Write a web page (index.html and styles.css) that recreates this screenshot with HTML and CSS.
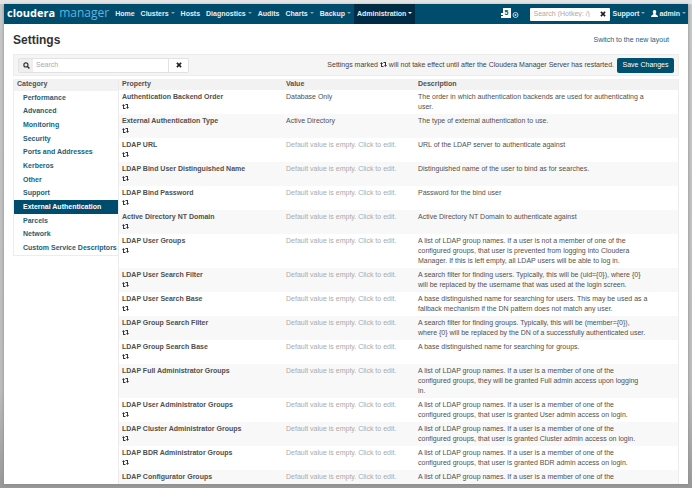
FILE: index.html
```html
<!DOCTYPE html>
<html lang="en">
<head>
<meta charset="utf-8">
<title>Settings - Cloudera Manager</title>
<link rel="stylesheet" href="styles.css">
</head>
<body>
<svg class="defs" aria-hidden="true">
  <symbol id="restart" viewBox="0 0 7 5"><path d="M0 2 1.500 0 3 2H2v2h1.500V5H1V2zM7 3 5.500 5 4 3h1V1H3.500V0H6v3z"/></symbol>
  <symbol id="cross" viewBox="0 0 10 10"><path d="M2.400.5 5 3.100 7.600.5 9.500 2.400 6.900 5l2.600 2.600-1.900 1.900L5 6.900 2.400 9.500.5 7.600 3.100 5 .5 2.400z"/></symbol>
</svg>
<div class="window">
  <header class="navbar">
    <a class="brand" href="#"><span class="brand-main">cloudera</span><span class="brand-sub">manager</span></a>
    <nav class="menu">
      <a href="#">Home</a>
      <a class="drop" href="#">Clusters</a>
      <a href="#">Hosts</a>
      <a class="drop" href="#">Diagnostics</a>
      <a href="#">Audits</a>
      <a class="drop" href="#">Charts</a>
      <a class="drop" href="#">Backup</a>
      <a class="drop active" href="#">Administration</a>
    </nav>
    <div class="tools">
      <a class="commands" href="#" aria-label="Running commands">
        <svg class="commands-icon" viewBox="0 0 18 12"><path fill="#fff" d="M2 0h8v10H0V8h2V7H0V5h2z"/><circle cx="14.500" cy="7" r="2.500" fill="none" stroke="#b8d8e6"/><circle cx="14.500" cy="7" r="1" fill="#b8d8e6"/></svg>
        <span class="badge">5</span>
      </a>
      <div class="quick">
        <input type="text" placeholder="Search (Hotkey: /)" aria-label="Search">
        <button type="button" aria-label="Clear"><svg class="cross"><use href="#cross"/></svg></button>
      </div>
      <a class="drop" href="#">Support</a>
      <a class="drop" href="#"><svg class="user" viewBox="0 0 12 12"><path fill="#fff" d="M6 0c2 0 3 1.500 3 3.500C9 5 8.300 6.200 7.500 7c.5 1.500 4.500 1.500 4.500 5H0c0-3.500 4-3.500 4.500-5C3.700 6.200 3 5 3 3.500 3 1.500 4 0 6 0z"/></svg>admin</a>
    </div>
  </header>
  <main class="page">
    <div class="title-row">
      <h1>Settings</h1>
      <a href="#">Switch to the new layout</a>
    </div>
    <form class="filter">
      <div class="search">
        <label for="search" aria-label="Search settings"><svg class="lens" viewBox="0 0 12 12"><circle cx="5" cy="5" r="3.500" fill="none" stroke="#333" stroke-width="2"/><path d="m8 8 3 3" stroke="#333" stroke-width="2.500"/></svg></label>
        <input id="search" type="text" placeholder="Search">
        <button type="button" aria-label="Clear search"><svg class="cross"><use href="#cross"/></svg></button>
      </div>
      <p>Settings marked <svg class="restart"><use href="#restart"/></svg> will not take effect until after the Cloudera Manager Server has restarted.</p>
      <button class="save" type="submit">Save Changes</button>
    </form>
    <div class="columns">
      <aside>
        <h2>Category</h2>
        <ul>
          <li><a href="#">Performance</a></li>
          <li><a href="#">Advanced</a></li>
          <li><a href="#">Monitoring</a></li>
          <li><a href="#">Security</a></li>
          <li><a href="#">Ports and Addresses</a></li>
          <li><a href="#">Kerberos</a></li>
          <li><a href="#">Other</a></li>
          <li><a href="#">Support</a></li>
          <li><a class="selected" href="#">External Authentication</a></li>
          <li><a href="#">Parcels</a></li>
          <li><a href="#">Network</a></li>
          <li><a href="#">Custom Service Descriptors</a></li>
        </ul>
      </aside>
      <div class="settings">
      <table>
        <colgroup><col class="col-property"><col class="col-value"><col></colgroup>
        <thead><tr><th>Property</th><th>Value</th><th>Description</th></tr></thead>
        <tbody>
          <tr><th>Authentication Backend Order<svg class="restart"><use href="#restart"/></svg></th><td>Database Only</td><td>The order in which authentication backends are used for authenticating a user.</td></tr>
          <tr><th>External Authentication Type<svg class="restart"><use href="#restart"/></svg></th><td>Active Directory</td><td>The type of external authentication to use.</td></tr>
          <tr><th>LDAP URL<svg class="restart"><use href="#restart"/></svg></th><td class="empty">Default value is empty. Click to edit.</td><td>URL of the LDAP server to authenticate against</td></tr>
          <tr><th>LDAP Bind User Distinguished Name<svg class="restart"><use href="#restart"/></svg></th><td class="empty">Default value is empty. Click to edit.</td><td>Distinguished name of the user to bind as for searches.</td></tr>
          <tr><th>LDAP Bind Password<svg class="restart"><use href="#restart"/></svg></th><td class="empty">Default value is empty. Click to edit.</td><td>Password for the bind user</td></tr>
          <tr><th>Active Directory NT Domain<svg class="restart"><use href="#restart"/></svg></th><td class="empty">Default value is empty. Click to edit.</td><td>Active Directory NT Domain to authenticate against</td></tr>
          <tr><th>LDAP User Groups<svg class="restart"><use href="#restart"/></svg></th><td class="empty">Default value is empty. Click to edit.</td><td>A list of LDAP group names. If a user is not a member of one of the configured groups, that user is prevented from logging into Cloudera Manager. If this is left empty, all LDAP users will be able to log in.</td></tr>
          <tr><th>LDAP User Search Filter<svg class="restart"><use href="#restart"/></svg></th><td class="empty">Default value is empty. Click to edit.</td><td>A search filter for finding users. Typically, this will be (uid={0}), where {0} will be replaced by the username that was used at the login screen.</td></tr>
          <tr><th>LDAP User Search Base<svg class="restart"><use href="#restart"/></svg></th><td class="empty">Default value is empty. Click to edit.</td><td>A base distinguished name for searching for users. This may be used as a fallback mechanism if the DN pattern does not match any user.</td></tr>
          <tr><th>LDAP Group Search Filter<svg class="restart"><use href="#restart"/></svg></th><td class="empty">Default value is empty. Click to edit.</td><td>A search filter for finding groups. Typically, this will be (member={0}), where {0} will be replaced by the DN of a successfully authenticated user.</td></tr>
          <tr><th>LDAP Group Search Base<svg class="restart"><use href="#restart"/></svg></th><td class="empty">Default value is empty. Click to edit.</td><td>A base distinguished name for searching for groups.</td></tr>
          <tr><th>LDAP Full Administrator Groups<svg class="restart"><use href="#restart"/></svg></th><td class="empty">Default value is empty. Click to edit.</td><td>A list of LDAP group names. If a user is a member of one of the<br>configured groups, they will be granted Full admin access upon logging<br>in.</td></tr>
          <tr><th>LDAP User Administrator Groups<svg class="restart"><use href="#restart"/></svg></th><td class="empty">Default value is empty. Click to edit.</td><td>A list of LDAP group names. If a user is a member of one of the<br>configured groups, that user is granted User admin access on login.</td></tr>
          <tr><th>LDAP Cluster Administrator Groups<svg class="restart"><use href="#restart"/></svg></th><td class="empty">Default value is empty. Click to edit.</td><td>A list of LDAP group names. If a user is a member of one of the<br>configured groups, that user is granted Cluster admin access on login.</td></tr>
          <tr><th>LDAP BDR Administrator Groups<svg class="restart"><use href="#restart"/></svg></th><td class="empty">Default value is empty. Click to edit.</td><td>A list of LDAP group names. If a user is a member of one of the<br>configured groups, that user is granted BDR admin access on login.</td></tr>
          <tr><th>LDAP Configurator Groups<svg class="restart"><use href="#restart"/></svg></th><td class="empty">Default value is empty. Click to edit.</td><td>A list of LDAP group names. If a user is a member of one of the<br>configured groups, that user is granted Configurator access on login.</td></tr>
        </tbody>
      </table>
      </div>
    </div>
  </main>
</div>
</body>
</html>
```

FILE: styles.css
```css
* { box-sizing: border-box; }

body {
  margin: 0;
  height: 100vh;
  padding: 4px;
  overflow: hidden;
  background: linear-gradient(#e4e4e4 4px, #c8c8c8 4px, #bdbdbd 80%, #999);
  color: #505050;
  font: 7px/10px "Liberation Sans", Arial, sans-serif;
}

a { color: #1a5f7a; text-decoration: none; }
input, button { font: inherit; margin: 0; border: 0; padding: 0; }
h1, h2, p, ul { margin: 0; padding: 0; }
ul { list-style: none; }
.defs { display: none; }
.cross { display: block; width: 6px; height: 6px; fill: #222; }
.restart { width: 7px; height: 5px; fill: #333; }

.window {
  height: 100%;
  overflow: hidden;
  background: #fff;
  box-shadow: 0 1px 3px #888;
}

/* Top bar */
.navbar {
  display: flex;
  align-items: center;
  height: 20px;
  background: #004c6d;
}
.navbar a { color: #e4eef3; font-weight: bold; }
.navbar .brand {
  display: flex;
  align-items: baseline;
  gap: 4px;
  padding: 0 3px 2px;
  color: #fff;
  font: 12px/18px "Open Sans", sans-serif;
}
.brand-main { font-weight: 700; font-size: 11px; }
.brand-sub { color: #5fb4e0; }
.menu { display: flex; }
.menu a { padding: 0 3px; line-height: 20px; }
.menu a.active { background: #002b45; }
.drop::after {
  content: "";
  display: inline-block;
  margin-left: 2px;
  vertical-align: 2px;
  border: 2px solid transparent;
  border-top-color: #7fa9bd;
  border-bottom: 0;
}
.drop.active::after { border-top-color: #fff; }
.tools {
  display: flex;
  align-items: center;
  gap: 3px;
  margin-left: auto;
  padding-right: 2px;
}
.commands { position: relative; margin-right: 8px; }
.commands-icon { display: block; width: 18px; height: 12px; }
.navbar .badge {
  position: absolute;
  left: 4px;
  top: 0;
  color: #004c6d;
  font-size: 7px;
  line-height: 9px;
}
.quick {
  display: flex;
  align-items: center;
  width: 80px;
  height: 13px;
  padding: 0 4px;
  background: #fff;
  border-radius: 1px;
}
input { min-width: 0; flex: 1; background: transparent; color: #444; }
input::placeholder { color: #aaa; opacity: 1; }
button { background: transparent; }
.user { width: 7px; height: 7px; margin: 0 1px 0 3px; vertical-align: -1px; }

/* Page head */
.page { padding: 0 9px; }
.title-row {
  display: flex;
  justify-content: space-between;
  align-items: center;
  height: 30px;
  padding: 2px 10px 0 0;
}
h1 { color: #333; font-size: 12px; line-height: 16px; }
.filter {
  display: flex;
  align-items: center;
  height: 22px;
  padding: 0 4px;
  background: #f5f5f5;
  border: 1px solid #ececec;
}
.search {
  display: flex;
  width: 171px;
  height: 15px;
  background: #fff;
  border: 1px solid #e2e2e2;
  border-radius: 2px;
}
.search label {
  display: grid;
  place-items: center;
  width: 14px;
  background: #eee;
}
.lens { width: 7px; height: 7px; }
.search input { padding: 0 3px; }
.search button {
  display: grid;
  place-items: center;
  width: 20px;
  border-left: 1px solid #e2e2e2;
}
.filter p { margin: 0 3px 0 auto; color: #444; }
.save {
  width: 57px;
  height: 15px;
  border-radius: 2px;
  background: #00506f;
  color: #fff;
}

/* Category list and settings table */
.columns {
  display: grid;
  grid-template-columns: 105px 1fr;
  align-items: start;
  margin-top: 3px;
}
aside { border: 1px solid #ececec; border-width: 0 0 1px 1px; }
h2, thead { background: #f2f2f2; }
h2 { height: 12px; padding: 0 3px; font-size: 7px; line-height: 10px; }
aside ul {
  display: grid;
  grid-auto-rows: 1fr;
  height: 164px;
}
aside a {
  display: flex;
  align-items: center;
  height: 100%;
  padding-left: 9px;
  font-weight: bold;
  white-space: nowrap;
}
aside a.selected { background: #004c6d; color: #fff; }
.settings {
  border: 1px solid #ececec;
  border-width: 0 1px;
}
table {
  width: 100%;
  table-layout: fixed;
  border-collapse: collapse;
}
.col-property { width: 164px; }
.col-value { width: 132px; }
th, td {
  padding: 2px 0 2px 3px;
  text-align: left;
  vertical-align: top;
}
td:last-child { padding-right: 29px; }
thead th { padding: 0 0 1px 3px; }
tbody tr:nth-child(even) { background: #f8f8f8; }
tbody .restart { display: block; margin: 2px 0 3px; }
.empty { color: #aaa; }
```
